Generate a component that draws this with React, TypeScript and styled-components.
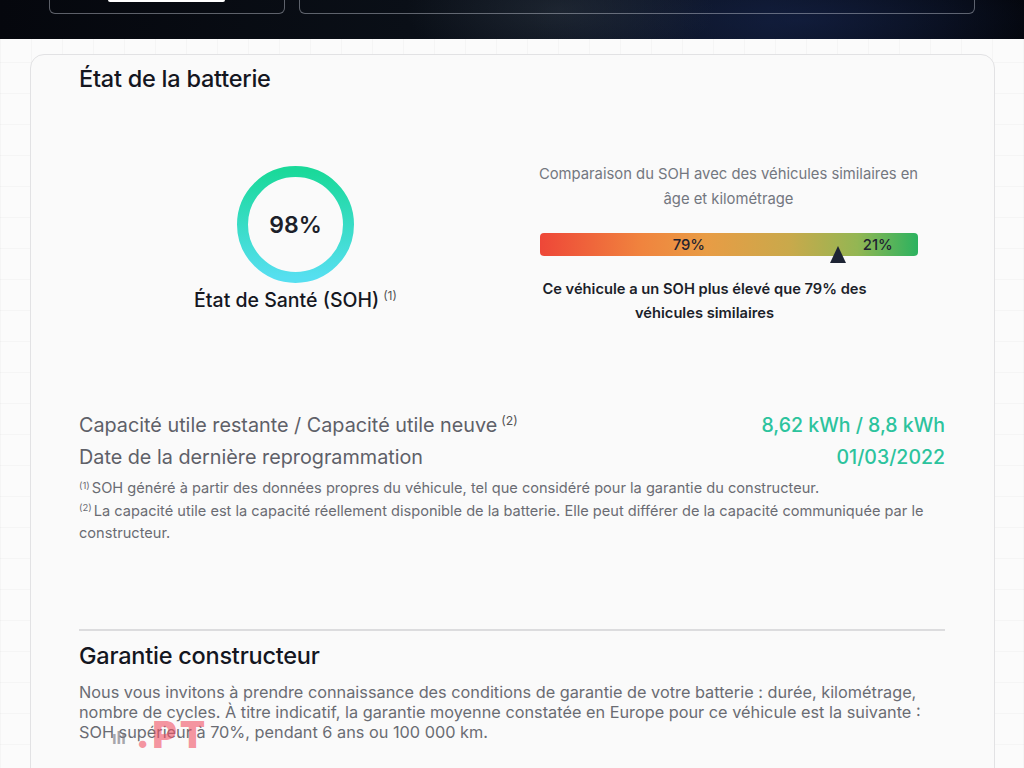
import React from 'react';
import styled, { createGlobalStyle } from 'styled-components';

const GlobalStyle = createGlobalStyle`
	html, body {
		margin: 0;
		padding: 0;
	}
	body {
		font-family: Inter, 'Noto Sans', 'Liberation Sans', sans-serif;
		color: #1c1f2a;
		background-color: #fbfbfb;
		background-image:
			linear-gradient(rgba(0, 0, 0, 0.025) 1px, transparent 1px),
			linear-gradient(90deg, rgba(0, 0, 0, 0.025) 1px, transparent 1px);
		background-size: 31px 31px;
	}
`;

const Page = styled.div`
	position: relative;
	width: 1024px;
	height: 768px;
	overflow: hidden;
`;

const Hero = styled.header`
	height: 39px;
	display: flex;
	align-items: flex-start;
	gap: 14px;
	padding-left: 49px;
	background:
		radial-gradient(ellipse 220px 90px at 560px 10px, rgba(50, 60, 70, 0.45), transparent 70%),
		radial-gradient(ellipse 360px 80px at 800px 20px, rgba(22, 36, 78, 0.55), transparent 75%),
		linear-gradient(90deg, #05070d 0%, #0a0f17 40%, #0c1426 75%, #03050a 100%);
	box-sizing: border-box;
`;

const HeroBox = styled.div<{ $w: number }>`
	width: ${({ $w }) => $w}px;
	height: 14px;
	border: 1px solid rgba(200, 205, 215, 0.45);
	border-top: none;
	border-radius: 0 0 6px 6px;
	box-sizing: border-box;
	display: flex;
	padding-left: 58px;
`;

const HeroButton = styled.div`
	width: 117px;
	height: 2px;
	background: #ffffff;
	border-radius: 0 0 3px 3px;
`;

const Card = styled.section`
	margin: 15px 0 0 30px;
	width: 965px;
	height: 760px;
	box-sizing: border-box;
	border: 1px solid #e2e2e4;
	border-radius: 14px;
	background: #fafafa;
	padding: 9px 49px 0 48px;
`;

const Title = styled.h2`
	margin: 0;
	font-size: 23.5px;
	line-height: 30px;
	font-weight: 500;
	letter-spacing: -0.01em;
	color: #14161f;
`;

const Overview = styled.div`
	display: grid;
	grid-template-columns: 1fr 1fr;
	margin-top: 66px;
	height: 210px;
`;

const Column = styled.div`
	display: flex;
	flex-direction: column;
	align-items: center;
	text-align: center;
`;

const Ring = styled.div`
	position: relative;
	width: 117px;
	height: 117px;
	margin-top: 6px;
	display: flex;
	align-items: center;
	justify-content: center;
`;

const RingValue = styled.span`
	position: absolute;
	font-size: 23px;
	font-weight: 600;
	color: #1c1f2a;
`;

const HealthLabel = styled.div`
	margin-top: 4px;
	font-size: 19.5px;
	line-height: 26px;
	font-weight: 500;
	color: #15171f;
`;

const Sup = styled.span`
	position: relative;
	top: -0.55em;
	font-size: 0.62em;
	font-weight: 400;
	margin-left: 4px;
	color: #555;
`;

const CompareText = styled.p`
	margin: 2px 0 0;
	font-size: 14.8px;
	line-height: 25px;
	color: #737780;
	width: 385px;
`;

const Gauge = styled.div`
	position: relative;
	width: 378px;
	height: 23px;
	margin-top: 21px;
	border-radius: 4px;
	display: flex;
	background: linear-gradient(90deg, #ee4738 0%, #f0843e 27%, #e89c45 44%, #c9a94b 66%, #93b653 84%, #2bb25f 100%);
`;

const GaugePart = styled.div<{ $pct: number }>`
	width: ${({ $pct }) => $pct}%;
	display: flex;
	align-items: center;
	justify-content: center;
	font-size: 14.8px;
	font-weight: 500;
	color: #1f2230;
`;

const Marker = styled.div<{ $pct: number }>`
	position: absolute;
	left: ${({ $pct }) => $pct}%;
	top: 13px;
	width: 0;
	height: 0;
	transform: translateX(-50%);
	border-left: 8px solid transparent;
	border-right: 8px solid transparent;
	border-bottom: 17px solid #1d2434;
`;

const Verdict = styled.p`
	margin: 21px 0 0;
	box-sizing: border-box;
	width: 378px;
	padding-right: 48px;
	font-size: 14.7px;
	line-height: 24px;
	font-weight: 600;
	color: #1c1f2a;
`;

const Specs = styled.div`
	display: flex;
	flex-direction: column;
	gap: 2px;
	margin-top: 40px;
`;

const SpecRow = styled.div`
	display: flex;
	justify-content: space-between;
	align-items: center;
	height: 30px;
`;

const SpecLabel = styled.span`
	font-size: 19.8px;
	color: #5e6068;
`;

const SpecValue = styled.span`
	font-size: 19.5px;
	color: #2cc39d;
	font-weight: 500;
`;

const Notes = styled.div`
	margin-top: 6px;
	font-size: 14.6px;
	line-height: 20.5px;
	color: #6a6c73;
`;

const NoteMark = styled.span`
	position: relative;
	top: -0.45em;
	font-size: 0.65em;
	margin-right: 2px;
`;

const Divider = styled.hr`
	margin: 85px 0 0;
	border: none;
	height: 2px;
	background: #dcdcde;
`;

const SubTitle = styled(Title)`
	margin-top: 10px;
`;

const Body = styled.p`
	margin: 11px 0 0;
	font-size: 16.3px;
	line-height: 20px;
	color: #6a6c73;
`;

const Watermark = styled.div`
	position: absolute;
	left: 112px;
	top: 716px;
	display: flex;
	align-items: flex-end;
	gap: 10px;
	pointer-events: none;
`;

const WatermarkIcon = styled.span`
	font-size: 17px;
	font-weight: 700;
	color: rgba(110, 110, 120, 0.6);
	line-height: 1;
	margin-bottom: 6px;
`;

const WatermarkText = styled.span`
	font-size: 37px;
	font-weight: 900;
	color: rgba(240, 80, 100, 0.62);
	letter-spacing: 0.08em;
	line-height: 1;
`;

const HealthRing = ({ value }: { value: number }) => (
	<Ring>
		<svg width="117" height="117" viewBox="0 0 117 117">
			<defs>
				<linearGradient id="ringGrad" x1="0" y1="0" x2="0" y2="1">
					<stop offset="0%" stopColor="#1ad99a" />
					<stop offset="100%" stopColor="#56dff0" />
				</linearGradient>
			</defs>
			<circle cx="58.5" cy="58.5" r="53" fill="none" stroke="url(#ringGrad)" strokeWidth="11" />
		</svg>
		<RingValue>{value}%</RingValue>
	</Ring>
);

export default function App() {
	const better = 79;
	return (
		<Page>
			<GlobalStyle />
			<Hero>
				<HeroBox $w={236}>
					<HeroButton />
				</HeroBox>
				<HeroBox $w={676} />
			</Hero>
			<Card>
				<Title>État de la batterie</Title>
				<Overview>
					<Column>
						<HealthRing value={98} />
						<HealthLabel>
							État de Santé (SOH)<Sup>(1)</Sup>
						</HealthLabel>
					</Column>
					<Column>
						<CompareText>Comparaison du SOH avec des véhicules similaires en âge et kilométrage</CompareText>
						<Gauge>
							<GaugePart $pct={better}>{better}%</GaugePart>
							<GaugePart $pct={100 - better}>{100 - better}%</GaugePart>
							<Marker $pct={better} />
						</Gauge>
						<Verdict>Ce véhicule a un SOH plus élevé que {better}% des véhicules similaires</Verdict>
					</Column>
				</Overview>
				<Specs>
					<SpecRow>
						<SpecLabel>
							Capacité utile restante / Capacité utile neuve<Sup>(2)</Sup>
						</SpecLabel>
						<SpecValue>8,62 kWh / 8,8 kWh</SpecValue>
					</SpecRow>
					<SpecRow>
						<SpecLabel>Date de la dernière reprogrammation</SpecLabel>
						<SpecValue>01/03/2022</SpecValue>
					</SpecRow>
				</Specs>
				<Notes>
					<div>
						<NoteMark>(1)</NoteMark>SOH généré à partir des données propres du véhicule, tel que considéré pour la garantie du constructeur.
					</div>
					<div>
						<NoteMark>(2)</NoteMark>La capacité utile est la capacité réellement disponible de la batterie. Elle peut différer de la capacité communiquée par le constructeur.
					</div>
				</Notes>
				<Divider />
				<SubTitle>Garantie constructeur</SubTitle>
				<Body>
					Nous vous invitons à prendre connaissance des conditions de garantie de votre batterie : durée, kilométrage, nombre de cycles. À titre indicatif, la garantie moyenne constatée en Europe pour ce véhicule est la suivante : SOH supérieur à 70%, pendant 6 ans ou 100 000 km.
				</Body>
			</Card>
			<Watermark>
				<WatermarkIcon>ılı</WatermarkIcon>
				<WatermarkText>.PT</WatermarkText>
			</Watermark>
		</Page>
	);
}
